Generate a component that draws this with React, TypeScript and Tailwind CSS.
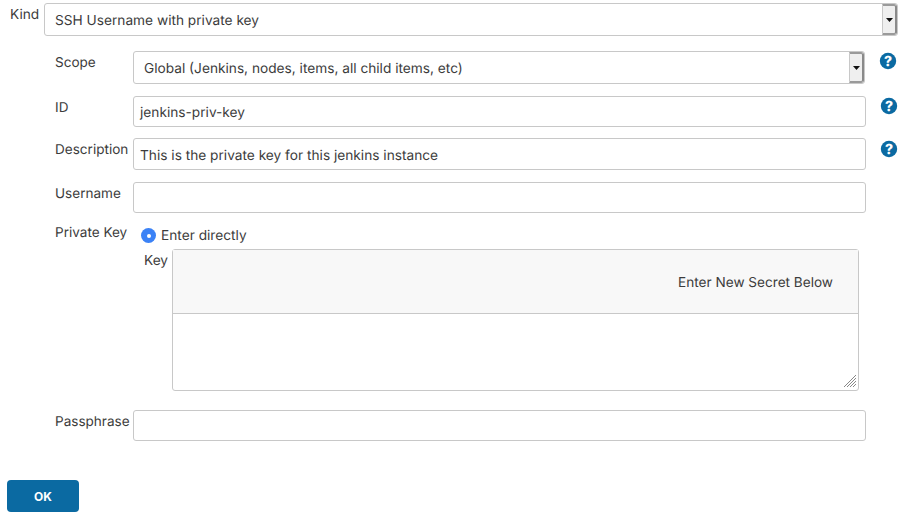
const font = { fontFamily: "Inter, sans-serif" };

function Arrow() {
  return (
    <div className="flex h-full w-[15px] items-center justify-center border-t-2 border-r-2 border-b-2 border-l border-t-[#9a9a9a] border-r-[#8a8a8a] border-b-[#9a9a9a] border-l-[#c8c8c8] bg-[#efefef] rounded-r-[3px]">
      <svg width="7" height="4" viewBox="0 0 7 4"><path d="M0 0h7L3.5 4z" fill="#111" /></svg>
    </div>
  );
}

function Select({ text, className }: { text: string; className: string }) {
  return (
    <div className={`flex h-[33px] items-center rounded-[3px] border border-[#c8c8c8] bg-white ${className}`}>
      <span className="flex-1 pl-[10px] pt-[4px] text-[13.7px] text-[#3c3c3c]">{text}</span>
      <Arrow />
    </div>
  );
}

function Input({ value, className = "" }: { value?: string; className?: string }) {
  return (
    <div className={`flex w-[733px] items-center rounded-[3px] border border-[#c8c8c8] bg-white pl-[6px] pt-[4px] text-[13.7px] text-[#3c3c3c] ${className}`}>
      {value}
    </div>
  );
}

function Help() {
  return (
    <svg width="18" height="18" viewBox="0 0 18 18" className="shrink-0">
      <circle cx="9" cy="9" r="8.2" fill="#0b6aa2" />
      <text x="9" y="14" textAnchor="middle" fontSize="14" fontWeight="800" fill="#fff" fontFamily="Inter, sans-serif">?</text>
    </svg>
  );
}

function Label({ text, className = "" }: { text: string; className?: string }) {
  return <div className={`w-[79px] shrink-0 text-[13.55px] leading-[17px] text-[#3c3c3c] whitespace-nowrap ${className}`}>{text}</div>;
}

export default function App() {
  return (
    <div style={font} className="h-[529px] w-[906px] overflow-hidden bg-white pt-[3px] text-[#3c3c3c] [text-rendering:geometricPrecision]">
      <div className="flex pl-[10px]">
        <div className="w-[34px] text-[13.7px] leading-[17px] pt-[4px]">Kind</div>
        <Select text="SSH Username with private key" className="w-[854px]" />
      </div>

      <div className="pl-[55px]">
        <div className="mt-[15px] flex">
          <Label text="Scope" className="mt-[4px]" />
          <Select text="Global (Jenkins, nodes, items, all child items, etc)" className="w-[732px] -ml-[1px]" />
          <div className="ml-[14px] mt-[1px]"><Help /></div>
        </div>

        <div className="mt-[12px] flex">
          <Label text="ID" className="mt-[4px] -mr-[1px]" />
          <Input value="jenkins-priv-key" className="h-[31px]" />
          <div className="ml-[14px] mt-[1px]"><Help /></div>
        </div>

        <div className="mt-[11px] flex">
          <Label text="Description" className="mt-[4px] -mr-[1px]" />
          <Input value="This is the private key for this jenkins instance" className="h-[32px]" />
          <div className="ml-[14px] mt-[2px]"><Help /></div>
        </div>

        <div className="mt-[12px] flex">
          <Label text="Username" className="mt-[4px] -mr-[1px]" />
          <Input className="h-[31px]" />
        </div>

        <div className="mt-[12px] flex">
          <Label text="Private Key" className="-mr-[1px]" />
          <div className="ml-[8px] mt-[1px] flex items-center gap-[5px] text-[13.7px] leading-[17px]">
            <span className="flex h-[15px] w-[15px] items-center justify-center rounded-full bg-[#3b82f6]">
              <span className="h-[4px] w-[4px] rounded-full bg-white" />
            </span>
            <span className="pt-[2px]">Enter directly</span>
          </div>
        </div>

        <div className="mt-[4px] flex">
          <div className="ml-[89px] w-[28px] pt-[4px] text-[13.7px] leading-[17px]">Key</div>
          <div className="relative h-[142px] w-[687px] rounded-[3px] border border-[#c8c8c8] bg-white">
            <div className="flex h-[64px] items-center justify-end border-b border-[#c8c8c8] bg-[#f8f8f8] pr-[25px] pt-[4px] text-[13.6px]">
              Enter New Secret Below
            </div>
            <svg width="14" height="14" viewBox="0 0 14 14" className="absolute right-[1px] bottom-[2px]" stroke="#888" strokeWidth="1">
              <path d="M1 13L13 1M4 13L13 4M7 13L13 7M10 13L13 10" />
            </svg>
          </div>
        </div>

        <div className="mt-[19px] flex">
          <Label text="Passphrase" className="mt-[4px] -mr-[1px]" />
          <Input className="h-[31px]" />
        </div>
      </div>

      <button className="ml-[7px] mt-[39px] block h-[32px] w-[72px] rounded-[4px] bg-[#0b6aa2] pt-[2px] text-[12px] font-bold text-white">OK</button>
    </div>
  );
}
